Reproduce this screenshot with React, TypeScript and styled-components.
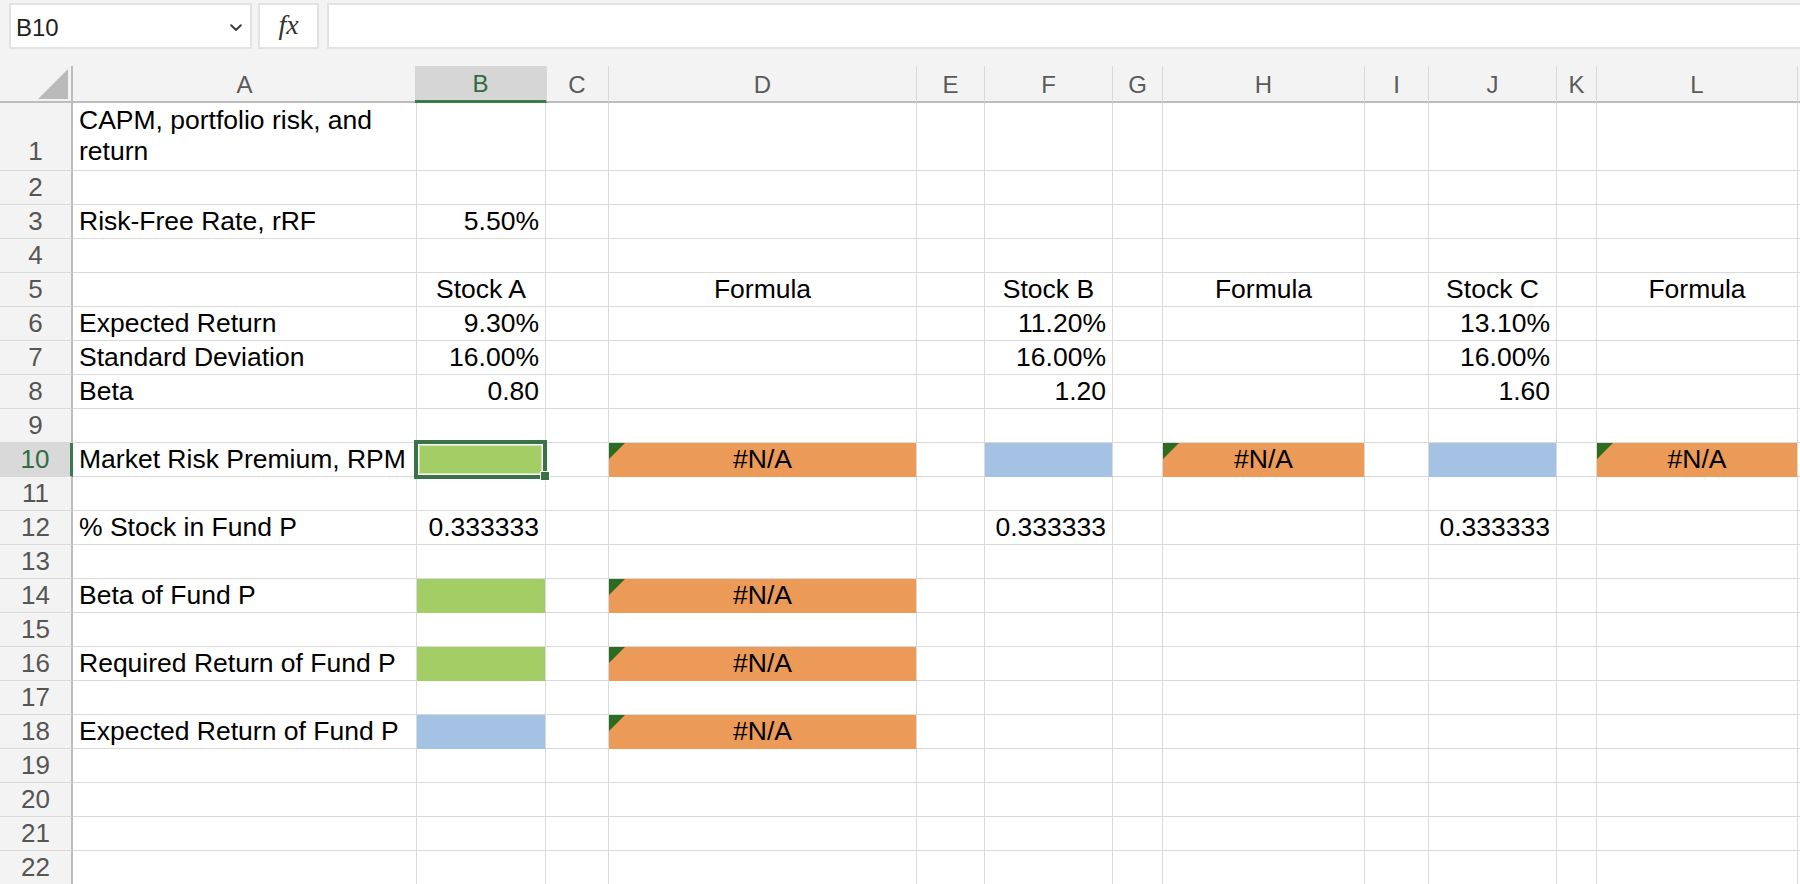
import React from "react";
import styled, { createGlobalStyle, css } from "styled-components";

type Fill = "green" | "orange" | "blue";
type Align = "left" | "right" | "center";

type CellDef = {
  v?: string;
  align?: Align;
  fill?: Fill;
  error?: boolean;
  selected?: boolean;
};

const COLUMNS = ["A", "B", "C", "D", "E", "F", "G", "H", "I", "J", "K", "L", "M"];
const COL_WIDTHS = [344, 129, 63, 308, 68, 128, 50, 202, 64, 128, 40, 201, 40];
const ROW_COUNT = 22;

const FILLS: Record<Fill, string> = {
  green: "#a3cd65",
  orange: "#ec9a57",
  blue: "#a4c2e4",
};

const na = (): CellDef => ({ v: "#N/A", align: "center", fill: "orange", error: true });

const CELLS: Record<string, CellDef> = {
  A1: { v: "CAPM, portfolio risk, and return" },
  A3: { v: "Risk-Free Rate, rRF" },
  B3: { v: "5.50%", align: "right" },
  B5: { v: "Stock A", align: "center" },
  D5: { v: "Formula", align: "center" },
  F5: { v: "Stock B", align: "center" },
  H5: { v: "Formula", align: "center" },
  J5: { v: "Stock C", align: "center" },
  L5: { v: "Formula", align: "center" },
  A6: { v: "Expected Return" },
  B6: { v: "9.30%", align: "right" },
  F6: { v: "11.20%", align: "right" },
  J6: { v: "13.10%", align: "right" },
  A7: { v: "Standard Deviation" },
  B7: { v: "16.00%", align: "right" },
  F7: { v: "16.00%", align: "right" },
  J7: { v: "16.00%", align: "right" },
  A8: { v: "Beta" },
  B8: { v: "0.80", align: "right" },
  F8: { v: "1.20", align: "right" },
  J8: { v: "1.60", align: "right" },
  A10: { v: "Market Risk Premium, RPM" },
  B10: { fill: "green", selected: true },
  D10: na(),
  F10: { fill: "blue" },
  H10: na(),
  J10: { fill: "blue" },
  L10: na(),
  A12: { v: "% Stock in Fund P" },
  B12: { v: "0.333333", align: "right" },
  F12: { v: "0.333333", align: "right" },
  J12: { v: "0.333333", align: "right" },
  A14: { v: "Beta of Fund P" },
  B14: { fill: "green" },
  D14: na(),
  A16: { v: "Required Return of Fund P" },
  B16: { fill: "green" },
  D16: na(),
  A18: { v: "Expected Return of Fund P" },
  B18: { fill: "blue" },
  D18: na(),
};

const ACTIVE_COL = "B";
const ACTIVE_ROW = 10;

const GlobalStyle = createGlobalStyle`
  html, body {
    margin: 0;
    padding: 0;
    background: #ffffff;
    overflow: hidden;
  }

  body {
    font-family: "Liberation Sans", Arial, sans-serif;
  }
`;

const Page = styled.div`
  width: 1800px;
  height: 884px;
  overflow: hidden;
  background: #ffffff;
`;

const Toolbar = styled.div`
  display: flex;
  align-items: flex-start;
  height: 66px;
  padding: 3px 0 0 9px;
  box-sizing: border-box;
  background: #f3f3f3;
`;

const NameBox = styled.div`
  display: flex;
  align-items: center;
  justify-content: space-between;
  width: 243px;
  height: 46px;
  padding: 3px 8px 0 5px;
  box-sizing: border-box;
  background: #ffffff;
  border: 2px solid #e2e2e2;
  font-size: 24px;
  color: #1f1f1f;
`;

const FxButton = styled.div`
  display: flex;
  align-items: center;
  justify-content: center;
  width: 61px;
  height: 46px;
  margin-left: 6px;
  box-sizing: border-box;
  background: #ffffff;
  border: 2px solid #e2e2e2;
  font-family: "Liberation Serif", "Times New Roman", serif;
  font-style: italic;
  font-size: 28px;
  color: #333333;
  padding-bottom: 3px;
`;

const FormulaBar = styled.div`
  flex: 1;
  height: 46px;
  margin-left: 8px;
  margin-right: -4px;
  box-sizing: border-box;
  background: #ffffff;
  border: 2px solid #e2e2e2;
`;

const Sheet = styled.div`
  display: grid;
  grid-template-columns: 73px ${COL_WIDTHS.map((w) => `${w}px`).join(" ")};
  grid-template-rows: 37px 68px repeat(${ROW_COUNT - 1}, 34px);
  font-family: "Liberation Sans", Arial, sans-serif;
`;

const Corner = styled.div`
  position: relative;
  background: #f3f3f3;
  border-right: 2px solid #bdbdbd;
  border-bottom: 2px solid #bdbdbd;
  box-sizing: border-box;

  svg {
    position: absolute;
    left: 37px;
    top: 2px;
  }
`;

const ColHeader = styled.div<{ $active?: boolean }>`
  display: flex;
  align-items: center;
  justify-content: center;
  box-sizing: border-box;
  background: #f3f3f3;
  border-bottom: 2px solid #bdbdbd;
  border-right: 1px solid #d9d9d9;
  font-size: 24px;
  color: #5a5a5a;
  padding-top: 2px;

  ${({ $active }) =>
    $active &&
    css`
      position: relative;
      background: #d6d6d6;
      color: #2f6d40;
      border-bottom: 3px solid #3b7a4b;
      margin-left: -2px;
      margin-right: -1px;
    `}
`;

const RowHeader = styled.div<{ $active?: boolean; $tall?: boolean }>`
  display: flex;
  align-items: ${({ $tall }) => ($tall ? "flex-end" : "center")};
  justify-content: center;
  box-sizing: border-box;
  background: #f3f3f3;
  border-right: 2px solid #bdbdbd;
  border-bottom: 1px solid #d9d9d9;
  padding-bottom: ${({ $tall }) => ($tall ? "3px" : "0")};
  font-size: 26px;
  line-height: 31px;
  color: #555555;

  ${({ $active }) =>
    $active &&
    css`
      background: #d9d9d9;
      color: #2f6d40;
      border-right: 3px solid #3b7a4b;
    `}
`;

const Cell = styled.div<{ $align: Align; $fill?: Fill; $tall?: boolean }>`
  position: relative;
  display: flex;
  align-items: ${({ $tall }) => ($tall ? "flex-end" : "center")};
  justify-content: ${({ $align }) =>
    $align === "right" ? "flex-end" : $align === "center" ? "center" : "flex-start"};
  box-sizing: border-box;
  padding: 0 6px ${({ $tall }) => ($tall ? "3px" : "0")} 6px;
  border-right: 1px solid #d9d9d9;
  border-bottom: 1px solid ${({ $fill }) => ($fill ? FILLS[$fill] : "#d9d9d9")};
  background: ${({ $fill }) => ($fill ? FILLS[$fill] : "#ffffff")};
  font-size: 26.5px;
  line-height: 31px;
  color: #000000;
  white-space: ${({ $tall }) => ($tall ? "normal" : "nowrap")};
  text-align: ${({ $align }) => $align};
`;

const ErrorMark = styled.span`
  position: absolute;
  left: 0;
  top: 0;
  width: 0;
  height: 0;
  border-top: 16px solid #2e6b22;
  border-right: 16px solid transparent;
`;

const Selection = styled.span`
  position: absolute;
  z-index: 3;
  left: -3px;
  top: -3px;
  right: -2px;
  bottom: -3px;
  border: 4px solid #3b7248;
  box-shadow: inset 0 0 0 1.5px #ffffff;
  pointer-events: none;
`;

const FillHandle = styled.span`
  position: absolute;
  z-index: 4;
  right: -5px;
  bottom: -5px;
  width: 8px;
  height: 8px;
  background: #3b7248;
  border: 1px solid #ffffff;
`;

function Chevron() {
  return (
    <svg width="12" height="8" viewBox="0 0 12 8" fill="none">
      <polyline points="1.2,1.2 6,6 10.8,1.2" stroke="#3f3f3f" strokeWidth="2" strokeLinecap="round" strokeLinejoin="round" />
    </svg>
  );
}

function CornerTriangle() {
  return (
    <svg width="32" height="32" viewBox="0 0 32 32">
      <polygon points="31,1 31,31 1,31" fill="#bababa" />
    </svg>
  );
}

export default function App() {
  const rows = Array.from({ length: ROW_COUNT }, (_, i) => i + 1);

  return (
    <Page>
      <GlobalStyle />
      <Toolbar>
        <NameBox>
          <span>B10</span>
          <Chevron />
        </NameBox>
        <FxButton>fx</FxButton>
        <FormulaBar />
      </Toolbar>

      <Sheet>
        <Corner>
          <CornerTriangle />
        </Corner>
        {COLUMNS.map((col) => (
          <ColHeader key={col} $active={col === ACTIVE_COL}>
            {col === "M" ? "" : col}
          </ColHeader>
        ))}

        {rows.map((row) => (
          <React.Fragment key={row}>
            <RowHeader $active={row === ACTIVE_ROW} $tall={row === 1}>
              {row}
            </RowHeader>
            {COLUMNS.map((col) => {
              const cell = CELLS[`${col}${row}`] ?? {};
              return (
                <Cell
                  key={col}
                  $align={cell.align ?? "left"}
                  $fill={cell.fill}
                  $tall={row === 1}
                  style={cell.selected ? { zIndex: 2 } : undefined}
                >
                  {cell.error && <ErrorMark />}
                  {cell.v}
                  {cell.selected && (
                    <>
                      <Selection />
                      <FillHandle />
                    </>
                  )}
                </Cell>
              );
            })}
          </React.Fragment>
        ))}
      </Sheet>
    </Page>
  );
}
